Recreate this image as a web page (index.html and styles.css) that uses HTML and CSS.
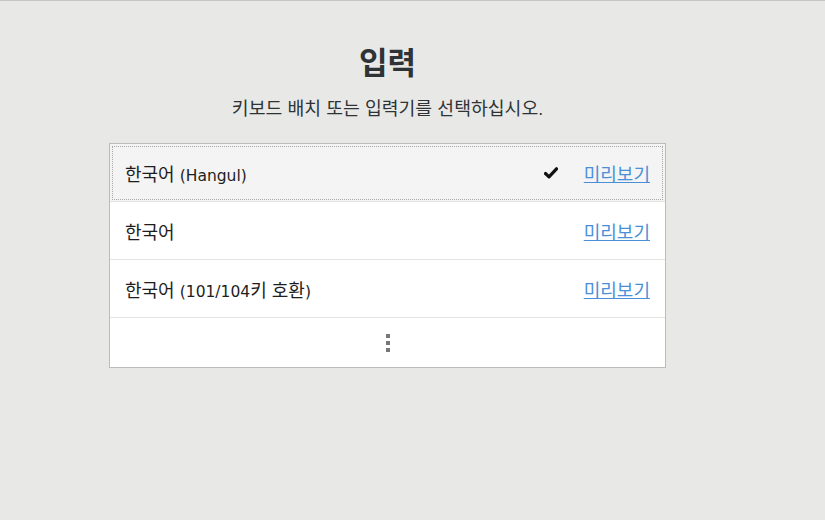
FILE: index.html
```html
<!DOCTYPE html>
<html lang="ko">
<head>
<meta charset="utf-8">
<link rel="stylesheet" href="styles.css">
</head>
<body>
<div class="page">
  <div class="content">
    <h1 class="title">입력</h1>
    <p class="subtitle">키보드 배치 또는 입력기를 선택하십시오<span class="lat">.</span></p>
    <div class="list">
      <div class="row selected">
        <span class="label">한국어 <span class="lat">(Hangul)</span></span>
        <svg class="check" width="14" height="12" viewBox="0 0 14 12"><path d="M1.5 6.5 L5 9.8 L12.5 1.8" fill="none" stroke="#111" stroke-width="3.2" stroke-linecap="round" stroke-linejoin="round"/></svg>
        <a class="link" href="#">미리보기</a>
      </div>
      <div class="row">
        <span class="label">한국어</span>
        <a class="link" href="#">미리보기</a>
      </div>
      <div class="row">
        <span class="label">한국어 <span class="lat">(101/104</span>키 호환<span class="lat">)</span></span>
        <a class="link" href="#">미리보기</a>
      </div>
      <div class="more">
        <svg width="4" height="18" viewBox="0 0 4 18"><rect x="0" y="0" width="4" height="4" fill="#787878"/><rect x="0" y="7" width="4" height="4" fill="#787878"/><rect x="0" y="14" width="4" height="4" fill="#787878"/></svg>
      </div>
    </div>
  </div>
</div>
</body>
</html>
```

FILE: styles.css
```css
html, body {
  margin: 0;
  padding: 0;
  height: 100%;
}
body {
  background: #e8e8e7;
  font-family: "Noto Sans CJK KR", "Noto Sans", sans-serif;
  color: #2e3436;
}
.page {
  border-top: 1px solid #c6c6c4;
  min-height: 519px;
  padding-left: 109px;
}
.content {
  width: 557px;
  display: flex;
  flex-direction: column;
  align-items: stretch;
}
.lat {
  font-family: "DejaVu Sans", sans-serif;
  font-size: 15.5px;
}
.title {
  margin: 40px 0 0 0;
  text-align: center;
  font-size: 31px;
  font-weight: 700;
  line-height: 40px;
  color: #2e3436;
}
.subtitle {
  margin: 14px 0 0 0;
  text-align: center;
  font-size: 18.3px;
  line-height: 24px;
  color: #2e3436;
}
.list {
  margin-top: 21px;
  background: #ffffff;
  border: 1px solid #bcbcba;
}
.row {
  height: 57px;
  display: flex;
  align-items: center;
  padding: 0 15px 0 15px;
  border-bottom: 1px solid #e4e4e2;
  font-size: 18px;
  color: #1e1e1e;
  box-sizing: content-box;
}
.row.selected {
  background: #f4f4f4;
  outline: 1px dotted #a8a8a8;
  outline-offset: -3px;
}
.label {
  flex: 1;
}
.check {
  display: block;
  margin-right: 26px;
}
.link {
  color: #4a90d9;
  text-decoration: underline;
}
.more {
  height: 49px;
  display: flex;
  align-items: center;
  justify-content: center;
}
.more svg {
  display: block;
}
```
